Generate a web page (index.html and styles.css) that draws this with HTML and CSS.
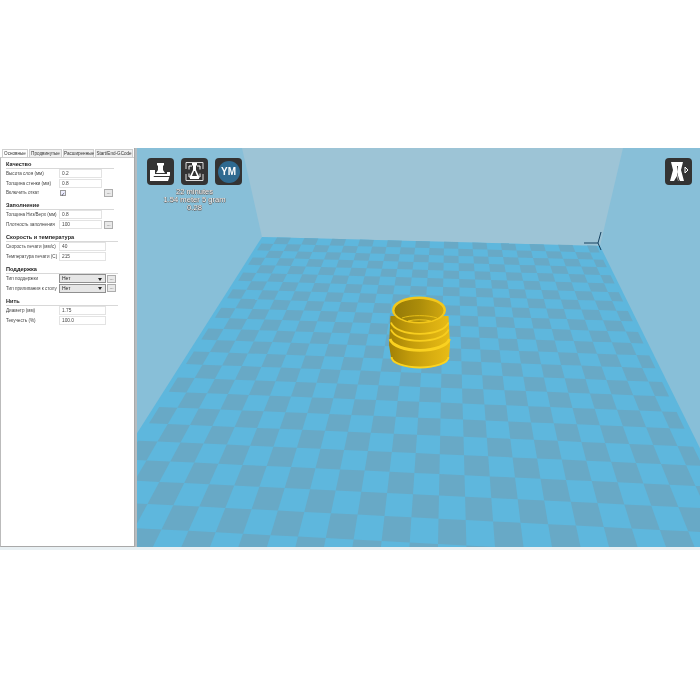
FILE: index.html
```html
<!DOCTYPE html>
<html lang="en">
<head>
  <meta charset="UTF-8">
  <title>Cura</title>
  <link rel="stylesheet" href="styles.css">
</head>
<body>

<div class="app">
  <!-- settings panel -->
  <div class="sidebar">
    <div class="tabs">
      <div class="tab active">Основные</div>
      <div class="tab tab-2">Продвинутые</div>
      <div class="tab tab-3">Расширенные</div>
      <div class="tab tab-4">Start/End-GCode</div>
    </div>
    <div class="panel">
      <div class="section">
        <h3>Качество</h3>
        <div class="row"><label>Высота слоя (мм)</label><div class="input">0.2</div></div>
        <div class="row"><label>Толщина стенки (мм)</label><div class="input">0.8</div></div>
        <div class="row"><label>Включить откат</label><div class="check-cell"><span class="check">✓</span></div><div class="more">...</div></div>
      </div>
      <div class="section">
        <h3>Заполнение</h3>
        <div class="row"><label>Толщина Низ/Верх (мм)</label><div class="input">0.8</div></div>
        <div class="row"><label>Плотность заполнения</label><div class="input">100</div><div class="more">...</div></div>
      </div>
      <div class="section wide">
        <h3>Скорость и температура</h3>
        <div class="row"><label>Скорость печати (мм/с)</label><div class="input">40</div></div>
        <div class="row"><label>Температура печати (C)</label><div class="input">215</div></div>
      </div>
      <div class="section wide">
        <h3>Поддержка</h3>
        <div class="row"><label>Тип поддержки</label><div class="select">Нет<span class="arrow"></span></div><div class="more">...</div></div>
        <div class="row"><label>Тип прилипания к столу</label><div class="select">Нет<span class="arrow"></span></div><div class="more">...</div></div>
      </div>
      <div class="section wide">
        <h3>Нить</h3>
        <div class="row"><label>Диаметр (мм)</label><div class="input">1.75</div></div>
        <div class="row"><label>Текучесть (%)</label><div class="input">100.0</div></div>
      </div>
    </div>
  </div>

  <!-- 3d view -->
  <div class="scene">
    <svg class="view" viewBox="137 148 563 399" width="563" height="399">
      <defs>
        <linearGradient id="bodyGrad" x1="0" x2="1" y1="0" y2="0">
          <stop offset="0" stop-color="#a28106"/>
          <stop offset="0.35" stop-color="#c29b0b"/>
          <stop offset="0.7" stop-color="#d9ae11"/>
          <stop offset="1" stop-color="#e8bc15"/>
        </linearGradient>
        <linearGradient id="innerGrad" x1="0" x2="1" y1="0" y2="0">
          <stop offset="0" stop-color="#957a07"/>
          <stop offset="0.5" stop-color="#ab8c0a"/>
          <stop offset="1" stop-color="#d0a70f"/>
        </linearGradient>
      </defs>
      <rect x="137" y="148" width="563" height="399" fill="#88bfd8"/>
      <polygon points="242,148 623,148 600,246 262,237" fill="#9dc4d6"/>
      <g id="bed"></g>

      <!-- axis marker -->
      <path d="M584 243H598M598 243L601 232M598 243L601 250" fill="none" stroke="#14405f" stroke-width="1"/>

      <!-- printed cap -->
      <path d="M390.500 316 L389 345 L391 357 A29 11 0 0 0 449 357 L450 345 L448.500 316 Z" fill="url(#bodyGrad)"/>
      <path d="M391.500 357 A28.500 10.500 0 0 0 448.500 357" fill="none" stroke="#fbd320" stroke-width="2"/>
      <path d="M390 339 A30 13 0 0 0 449.500 339" fill="none" stroke="#fad120" stroke-width="2.800"/>
      <path d="M391 329.500 A29 13 0 0 0 448.500 329.500" fill="none" stroke="#f8ce1e" stroke-width="1.800"/>
      <path d="M391 322.500 A29 13 0 0 0 448.500 322.500" fill="none" stroke="#f8ce1e" stroke-width="1.800"/>
      <ellipse cx="419" cy="310" rx="27" ry="13.500" fill="#f4c81b"/>
      <ellipse cx="419" cy="310.500" rx="24.500" ry="11.500" fill="url(#innerGrad)"/>
      <path d="M402 318 A22 6 0 0 1 437 318" fill="none" stroke="#eec417" stroke-width="0.900"/>
      <path d="M408 321 A16 4 0 0 1 431 321" fill="none" stroke="#f6cd1e" stroke-width="0.900"/>
    </svg>

    <div class="tools">
      <div class="tool-btns">
        <div class="tool-btn">
          <svg viewBox="0 0 27 27" width="27" height="27">
            <path d="M10 5h7v2l-1 1v4l2 3H9l2-3V8l-1-1z" fill="#fff"/>
            <path d="M3 12h5v4h12v-2h3v3l-2 6H3z" fill="#fff"/>
            <path d="M6.500 18H24v1H7z" fill="#333"/>
          </svg>
        </div>
        <div class="tool-btn">
          <svg viewBox="0 0 27 27" width="27" height="27">
            <path d="M5 11V4.500h17V11M5 16v6.500h17V16" fill="none" stroke="#ddd" stroke-width="1"/>
            <path d="M8 11.500V8h3M8 15.500V19h11v-3.500M19 11.500V8h-3" fill="none" stroke="#fff" stroke-width="1"/>
            <path d="M11 5h5v2l-1 1v4l3 6v3H9v-3l3-6V8l-1-1z" fill="#fff"/>
            <path d="M13 13h1l2 5h-5z" fill="#333"/>
          </svg>
        </div>
        <div class="tool-btn">
          <div class="ym">YM</div>
        </div>
      </div>
      <div class="stats">
        <div>22 minutes</div>
        <div>1.54 meter 5 gram</div>
        <div>0.28</div>
      </div>
    </div>

    <div class="tool-btn view-btn">
      <svg viewBox="0 0 27 27" width="27" height="27">
        <path d="M6 4h12l-2 8 3 11h-6l-1-5-3 5H5l3-11z" fill="#fff"/>
        <path d="M13 8l-1 6 2 7 1 2h-1.500l-1.500-7 0-8z" fill="#333"/>
        <path d="M20 9l3 3-3 3z" fill="none" stroke="#fff" stroke-width="1"/>
      </svg>
    </div>
  </div>
</div>

<script src="script.js"></script>
</body>
</html>
```

FILE: styles.css
```css
html, body { margin: 0; padding: 0; background: #fff; }
body { font-family: "Liberation Sans", Arial, sans-serif; color: #333; }
.app { display: flex; margin-top: 148px; height: 399px; border-bottom: 3px solid #e9f0f3; filter: blur(0.3px); }

.sidebar { width: 135px; flex: none; box-sizing: border-box; border-right: 1px solid #a9a9a9; background: #fff; }
.tabs { display: flex; height: 9px; padding-left: 2px; font-size: 4.600px; }
.tab { height: 8px; margin-top: 1px; line-height: 8px; text-align: center; background: #f0f0f0; border: 1px solid #cfcfcf; border-bottom: none; box-sizing: border-box; width: 26px; }
.tab.active { background: #fff; }
.tab-2 { width: 33px; margin-left: 1px; }
.tab-3 { width: 31px; margin-left: 1px; }
.tab-4 { width: 38px; margin-left: 1px; }
.panel { border-top: 1px solid #cfcfcf; border-left: 1px solid #bbb; border-bottom: 1px solid #a9a9a9; height: 390px; padding: 1.500px 0 0 5px; box-sizing: border-box; }

.section { margin-top: 3.500px; width: 108px; }
.section:first-child { margin-top: 0; }
.section.wide { width: 112px; }
.section h3 { margin: 0; height: 8px; line-height: 8px; font-size: 5.600px; font-weight: bold; color: #222; border-bottom: 1px solid #d8d8d8; box-sizing: content-box; }
.row { display: flex; align-items: center; height: 9.700px; font-size: 4.600px; }
.row label { width: 53px; flex: none; white-space: nowrap; color: #444; }
.input { width: 43px; height: 9px; padding-left: 2px; box-sizing: border-box; border: 1px solid #e3e3e3; font-size: 4.800px; line-height: 7px; color: #444; background: #fff; }
.wide .input { width: 47px; }
.check-cell { width: 44px; }
.check { display: block; width: 6px; height: 6px; border: 1px solid #999; background: #eef; font-size: 5px; line-height: 6px; text-align: center; color: #334; margin-left: 1px; box-sizing: border-box; }
.more { width: 9px; height: 8px; margin-left: 1px; border: 1px solid #adadad; background: #e9e9e9; box-sizing: border-box; font-size: 5px; line-height: 4px; text-align: center; color: #333; }
.input + .more { margin-left: 2px; }
.select { position: relative; width: 47px; height: 9px; box-sizing: border-box; border: 1px solid #8f8f8f; background: #e6e6e6; font-size: 5px; line-height: 7px; padding-left: 2px; color: #222; }
.arrow { position: absolute; right: 3px; top: 2.500px; border-top: 3px solid #222; border-left: 2px solid transparent; border-right: 2px solid transparent; }

.scene { position: relative; flex: 1; height: 399px; overflow: hidden; border-left: 2px solid #b7bcbf; box-sizing: border-box; }
.view { display: block; }
.tools { position: absolute; left: 10px; top: 10px; width: 95px; }
.tool-btns { display: flex; gap: 7px; }
.tool-btn { width: 27px; height: 27px; background: #333; border-radius: 4px; overflow: hidden; }
.tool-btn svg { display: block; }
.view-btn { position: absolute; left: 528px; top: 10px; }
.ym { margin: 2.500px; width: 22px; height: 22px; border-radius: 50%; background: #2f6a90; color: #fff; font-weight: bold; font-size: 10px; line-height: 22px; text-align: center; }
.stats { margin-top: 3px; font-size: 7.600px; line-height: 8px; text-align: center; color: #f4f8fa; text-shadow: 0.5px 0 0.5px #666, -0.5px 0 0.5px #666, 0 0.5px 0.5px #666, 0 -0.5px 0.5px #666; white-space: nowrap; }
```

FILE: script.js
```js
// perspective grid for the print bed
const vpRow = [-11000, -58];
const vpCol = [450, -58];
const corner = [262, 237];
const stepU = -0.02914 / 24;
const stepV = -0.02148;
const COLS = 24;
const ROWS = 30;
const EDGE = 0.25;
const PHASE = 0.1;

function project(u, v) {
  const t = u * stepU;
  const s = v * stepV;
  const w = 1 + t + s;
  return [
    (corner[0] + t * vpRow[0] + s * vpCol[0]) / w,
    (corner[1] + t * vpRow[1] + s * vpCol[1]) / w
  ];
}

function addPoly(parent, pts, fill) {
  const poly = document.createElementNS("http://www.w3.org/2000/svg", "polygon");
  poly.setAttribute("points", pts.map(p => p[0].toFixed(1) + "," + p[1].toFixed(1)).join(" "));
  poly.setAttribute("fill", fill);
  parent.appendChild(poly);
}

const bed = document.getElementById("bed");
addPoly(bed, [project(0, 0), project(COLS, 0), project(COLS, ROWS), project(0, ROWS)], "#5eb7dd");

for (let i = -1; i < COLS; i++) {
  for (let j = 0; j < ROWS; j++) {
    if ((i + j + 2) % 2 === 0) continue;
    const u0 = Math.max(i + PHASE, EDGE);
    const u1 = Math.min(i + 1 + PHASE, COLS - EDGE);
    if (u1 <= u0) continue;
    addPoly(bed, [project(u0, j), project(u1, j), project(u1, j + 1), project(u0, j + 1)], "#68a9c6");
  }
}
```
